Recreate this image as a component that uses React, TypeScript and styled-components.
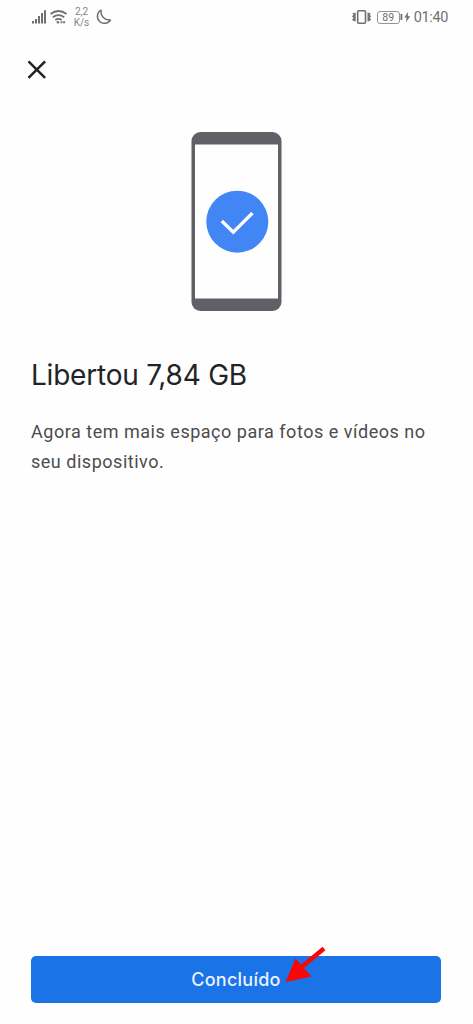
import React from "react";
import styled, { createGlobalStyle } from "styled-components";

const GlobalStyle = createGlobalStyle`
  * { box-sizing: border-box; }
  body { margin: 0; background: #fefefe; }
`;

const Screen = styled.div`
  display: flex;
  flex-direction: column;
  width: 100%;
  height: 100vh;
  min-height: 1024px;
  background: #fefefe;
  font-family: Roboto, sans-serif;
`;

const StatusBar = styled.header`
  display: flex;
  justify-content: space-between;
  height: 34px;
  padding: 0 25px 0 31px;
  color: #707070;
`;

const StatusGroup = styled.div`
  display: flex;
  align-items: center;
  height: 34px;
`;

const NetworkSpeed = styled.div`
  display: flex;
  flex-direction: column;
  align-items: center;
  width: 17px;
  margin: 0 6px 0 5px;
  font-size: 10px;
  line-height: 11px;
  white-space: nowrap;
  color: #858585;
`;

const Battery = styled.div`
  width: 23px;
  height: 13px;
  margin-left: 6px;
  border: 1px solid #949494;
  border-radius: 3px;
  font-size: 10.5px;
  line-height: 12px;
  text-align: center;
  color: #707070;
`;

const Clock = styled.time`
  margin-left: 3px;
  padding-top: 1px;
  font-size: 14.4px;
  letter-spacing: -0.3px;
  line-height: 34px;
`;

const CloseButton = styled.button`
  display: flex;
  width: 20px;
  height: 20px;
  margin: 26px 0 0 27px;
  padding: 0;
  border: 0;
  background: none;
  color: #222226;
`;

const Illustration = styled.div`
  display: flex;
  justify-content: center;
  margin-top: 52px;
  height: 179px;
`;

const Message = styled.main`
  flex: 1;
  padding: 0 31px;
`;

const Title = styled.h1`
  margin: 45px 0 0;
  font-family: Inter, sans-serif;
  font-size: 28px;
  font-weight: 370;
  line-height: 38px;
  letter-spacing: -0.22px;
  color: #222326;
`;

const Description = styled.p`
  margin: 23px 0 0;
  font-size: 18px;
  line-height: 29.5px;
  letter-spacing: 0.52px;
  color: #4b4c4f;
`;

const Footer = styled.footer`
  position: relative;
  padding: 0 32px 21px 31px;
`;

const DoneButton = styled.button`
  display: block;
  width: 100%;
  height: 47px;
  padding: 0;
  border: 0;
  border-radius: 5px;
  background: #1b73e8;
  color: #e9f2ff;
  font-family: Inter, sans-serif;
  font-size: 18px;
  font-weight: 500;
  letter-spacing: 0.25px;
  line-height: 47px;
`;

const Pointer = styled.svg`
  position: absolute;
  left: 284px;
  top: -11px;
  pointer-events: none;
`;

const SignalIcon = () => (
  <svg width="16" height="16" viewBox="0 0 16 16" fill="currentColor">
    <rect x="1" y="12" width="2" height="2.5" />
    <rect x="4" y="10" width="2" height="4.5" />
    <rect x="7" y="7" width="2" height="7.5" />
    <rect x="10" y="4" width="2" height="10.5" />
    <rect x="13" y="1.2" width="2" height="13.3" />
  </svg>
);

const WifiIcon = () => (
  <svg width="21" height="16" viewBox="0 0 21 16" fill="none" stroke="currentColor" strokeWidth="1.8">
    <path d="M3.5 5Q11.5-1 19.5 5M5.8 8.2Q11.5 4 17.2 8.2M8.3 11Q11.5 8.8 14.7 11" />
    <circle cx="10.9" cy="13.2" r="1.3" fill="currentColor" stroke="none" />
    <path d="M13.6 13.2h1.8M16.1 13.2h2" strokeWidth="2" />
  </svg>
);

const MoonIcon = () => (
  <svg width="16" height="16" viewBox="0 0 16 16" fill="none" stroke="currentColor" strokeWidth="1.5" strokeLinejoin="round">
    <path d="M5.1 1.2A7 7 0 1 0 14.4 11C8.8 11.6 4.3 7.1 5.1 1.2Z" />
  </svg>
);

const VibrateIcon = () => (
  <svg width="19" height="16" viewBox="0 0 19 16" fill="none" stroke="currentColor" strokeWidth="1.6">
    <rect x="5.7" y="1.8" width="7.8" height="12.4" rx="1" />
    <path d="M1 4.2l1.5 1.5L1 7.4l1.5 1.5L1 10.6l1.5 1.2M3 3.8v8.4M18.2 4.2l-1.5 1.5 1.5 1.7-1.5 1.5 1.5 1.7-1.5 1.2M16.2 3.8v8.4" strokeWidth="1.4" />
  </svg>
);

const ChargingIcon = () => (
  <svg width="11" height="14" viewBox="0 0 11 14" fill="currentColor">
    <rect x="0.5" y="4" width="1.8" height="6" />
    <path d="M8.2 1.8L4.3 7.6h2.3L6 12.2l4.2-6H7.7Z" />
  </svg>
);

const CloseIcon = () => (
  <svg width="20" height="20" viewBox="0 0 20 20" fill="none" stroke="currentColor" strokeWidth="2.5">
    <path d="M1.5 1.3l16.6 16.6M18.1 1.3L1.5 17.9" />
  </svg>
);

const PhoneIllustration = () => (
  <svg width="91" height="179" viewBox="0 0 91 179">
    <rect x="0.5" width="90" height="179" rx="9" fill="#5f6167" />
    <rect x="4" y="12.5" width="83" height="154" fill="#fefefe" />
    <circle cx="46.3" cy="89.7" r="31" fill="#4285f4" />
    <path d="M30.8 89l11.5 11.2 19.2-19.2" fill="none" stroke="#fff" strokeWidth="3.3" />
  </svg>
);

export default function App() {
  return (
    <>
      <GlobalStyle />
      <Screen>
        <StatusBar>
          <StatusGroup>
            <SignalIcon />
            <WifiIcon />
            <NetworkSpeed>
              <span>2,2</span>
              <span>K/s</span>
            </NetworkSpeed>
            <MoonIcon />
          </StatusGroup>
          <StatusGroup>
            <VibrateIcon />
            <Battery>89</Battery>
            <ChargingIcon />
            <Clock>01:40</Clock>
          </StatusGroup>
        </StatusBar>
        <CloseButton aria-label="Fechar">
          <CloseIcon />
        </CloseButton>
        <Illustration>
          <PhoneIllustration />
        </Illustration>
        <Message>
          <Title>Libertou 7,84 GB</Title>
          <Description>
            Agora tem mais espaço para fotos e vídeos no seu dispositivo.
          </Description>
        </Message>
        <Footer>
          <DoneButton>Concluído</DoneButton>
          <Pointer width="44" height="40" viewBox="0 0 44 40">
            <path d="M40 3.5L17 22.5" stroke="#f90606" strokeWidth="4.6" />
            <path d="M1.5 37L11.5 13.5L27.5 31.5Z" fill="#f90606" />
          </Pointer>
        </Footer>
      </Screen>
    </>
  );
}
